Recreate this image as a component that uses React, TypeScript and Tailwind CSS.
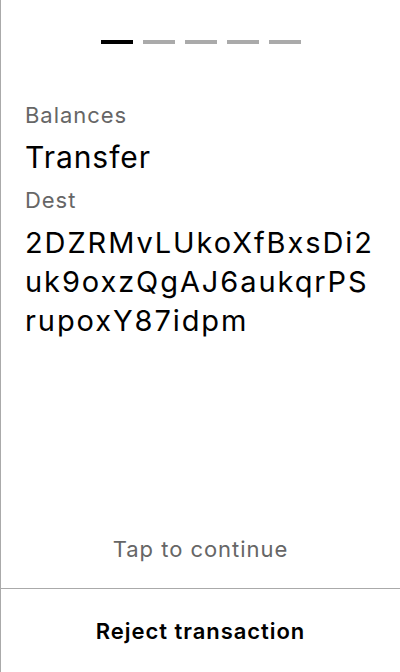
export default function App() {
  const steps = [0, 1, 2, 3, 4];

  return (
    <div
      className="flex h-[672px] w-[400px] flex-col border-l border-[#aaaaaa] bg-white tracking-[0.06em] text-black"
      style={{ fontFamily: 'Inter, "Noto Sans", sans-serif' }}
    >
      <div className="flex flex-1 flex-col px-6">
        {/* Step indicator */}
        <div className="flex justify-center gap-[10px] pt-10">
          {steps.map((s) => (
            <div
              key={s}
              className={`h-1 w-8 ${s === 0 ? 'bg-black' : 'bg-[#aaaaaa]'}`}
            />
          ))}
        </div>

        {/* Instruction details */}
        <div className="mt-[57px]">
          <div className="text-[22px] leading-[28px] text-[#666666]">Balances</div>
          <div className="mt-[10px] text-[30px] leading-[36px]">Transfer</div>
          <div className="mt-[11px] text-[22px] leading-[28px] text-[#666666]">Dest</div>
          <div className="mt-[9px] break-all text-[29px] leading-[39px] tracking-[0.066em]">
            2DZRMvLUkoXfBxsDi2uk9oxzQgAJ6aukqrPSrupoxY87idpm
          </div>
        </div>

        <div className="mt-auto pb-[25px] text-center text-[22px] leading-[28px] text-[#666666]">
          Tap to continue
        </div>
      </div>

      <div className="flex h-[84px] items-center justify-center border-t border-[#aaaaaa]">
        <span className="text-[22px] font-semibold leading-[28px]">Reject transaction</span>
      </div>
    </div>
  );
}
